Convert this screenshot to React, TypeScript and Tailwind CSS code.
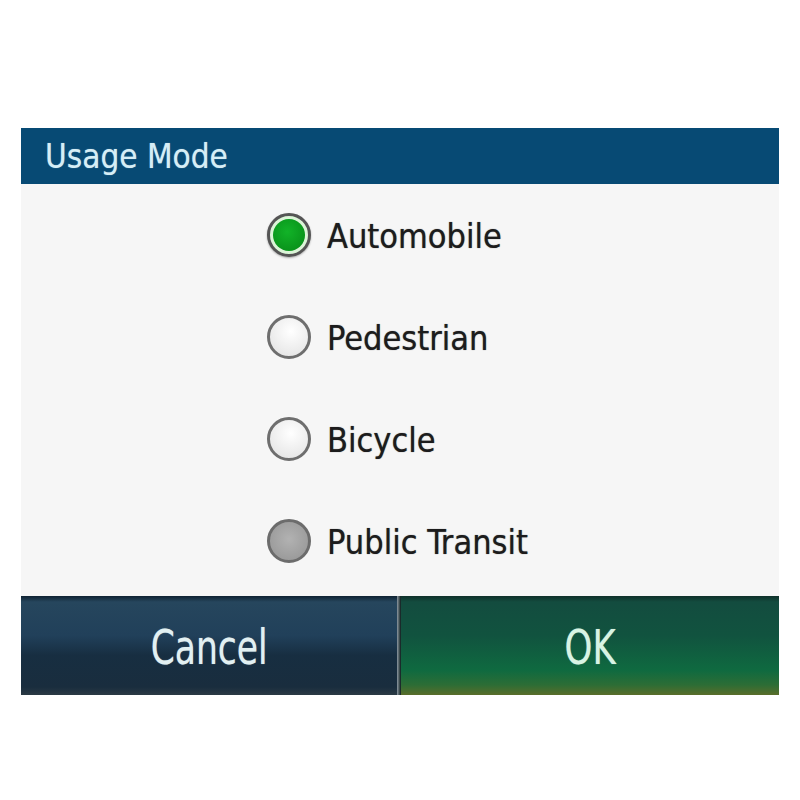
import React from "react";

const options = [
  { label: "Automobile", state: "on" },
  { label: "Pedestrian", state: "off" },
  { label: "Bicycle", state: "off" },
  { label: "Public Transit", state: "disabled" },
];

const Radio = ({ state }: { state: string }) => {
  if (state === "on") {
    return (
      <div className="w-[44px] h-[44px] rounded-full border-[3px] border-[#555555] bg-[#dcf5d8] p-[3px] shadow-[0_1px_2px_rgba(0,0,0,0.3)]">
        <div className="w-full h-full rounded-full bg-[radial-gradient(circle_at_45%_40%,#12b328,#068816)]" />
      </div>
    );
  }
  if (state === "disabled") {
    return (
      <div className="w-[44px] h-[44px] rounded-full border-[3px] border-[#6c6c6c] bg-[radial-gradient(circle_at_50%_45%,#b2b2b2,#939393)]" />
    );
  }
  return (
    <div className="w-[44px] h-[44px] rounded-full border-[3px] border-[#6e6e6e] bg-[radial-gradient(circle_at_55%_35%,#ffffff,#e0e0e0)]" />
  );
};

const App = () => {
  return (
    <div className="w-[800px] h-[800px] bg-white pt-[128px] px-[21px] font-['DejaVu_Sans_Condensed','DejaVu_Sans',sans-serif]">
      {/* Title bar */}
      <div className="h-[56px] bg-[#074a74] flex items-center pl-[24px]">
        <span className="text-[33px] text-[#d6eef6] leading-none [text-shadow:0_0_1px_rgba(214,238,246,0.6)]">
          Usage Mode
        </span>
      </div>

      {/* Options */}
      <div className="bg-[#f6f6f6] pb-[4px] flex flex-col">
        {options.map((o) => (
          <div key={o.label} className="h-[102px] flex items-center pl-[246px] gap-[16px]">
            <Radio state={o.state} />
            <span className="text-[34px] text-[#1c1c1c] leading-none pt-[2px] [text-shadow:0_0_1px_rgba(0,0,0,0.6)]">
              {o.label}
            </span>
          </div>
        ))}
      </div>

      {/* Buttons */}
      <div className="h-[99px] flex bg-[#f6f6f6]">
        <div className="w-[376px] flex items-center justify-center bg-[linear-gradient(to_bottom,#0f2232_0%,#26465d_6%,#21405a_40%,#172e41_60%,#192d3e_92%,#2b3a44_100%)]">
          <span className="text-[48px] text-[#e2f0f2] leading-none scale-x-[0.8] pt-[2px] [text-shadow:0_0_1px_rgba(226,240,242,0.6)]">
            Cancel
          </span>
        </div>
        <div className="w-[4px] bg-[linear-gradient(to_right,#8e9aa3,#0a1a1a)]" />
        <div className="flex-1 flex items-center justify-center bg-[linear-gradient(to_bottom,#0f302a_0%,#134c3f_6%,#11533f_40%,#0f6a40_75%,#2d6d35_90%,#5a6d2a_100%)]">
          <span className="text-[48px] text-[#d8f4e4] leading-none scale-x-[0.82] pt-[2px] [text-shadow:0_0_1px_rgba(216,244,228,0.6)]">
            OK
          </span>
        </div>
      </div>
    </div>
  );
};

export default App;
